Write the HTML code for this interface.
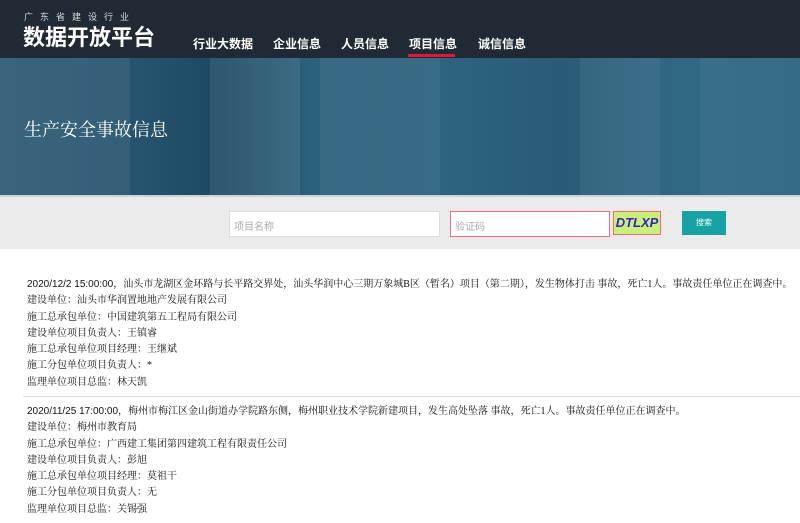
<!DOCTYPE html>
<html><head><meta charset="utf-8"><style>
*{margin:0;padding:0;box-sizing:border-box}
body{width:800px;height:523px;overflow:hidden;background:#fff;font-family:"Liberation Sans","Noto Sans CJK SC",sans-serif;position:relative}
.hdr{position:absolute;left:0;top:0;width:800px;height:58px;background:#1f2a35}
.sub{position:absolute;left:24px;top:10px;color:#ddd;font-size:9px;letter-spacing:7px}
.logo{position:absolute;left:23px;top:25px;color:#fff;font-size:22px;font-weight:bold;letter-spacing:0;line-height:26px}
.nav{position:absolute;top:35px;color:#fff;font-size:12px;font-weight:bold}
.ul{position:absolute;left:408px;top:54px;width:47px;height:3px;background:#e0173b}
.ban{position:absolute;left:0;top:58px;width:800px;height:137px;background:linear-gradient(90deg,#2c5c75 0%,#285670 15%,#1b4962 28%,#2d627d 40%,#2e6480 55%,#285b76 70%,#306884 85%,#2c6480 100%)}
.ban .v{position:absolute;top:0;height:137px;background:rgba(255,255,255,.06)}
.ban h1{position:absolute;left:24px;top:58px;color:#fff;font-size:18px;font-weight:normal;font-family:"Noto Serif CJK SC",serif}
.srch{position:absolute;left:0;top:195px;width:800px;height:54px;background:#ebebeb;border-top:2px solid #c9d3da}
.in{position:absolute;top:14px;height:26px;background:#fff;border:1px solid #ddd;font-size:10px;color:#aaa;padding:6px 4px}
.btn{position:absolute;left:682px;top:14px;width:44px;height:24px;background:#17a2a3;color:#fff;font-size:8px;text-align:center;line-height:24px}
.cap{position:absolute;left:613px;top:14px;width:48px;height:24px;border:1px solid #ff6b6b;background:#c9f07a;color:#3a1fc0;font-style:italic;font-size:13px;font-weight:bold;text-align:center;line-height:22px}
.c{position:absolute;left:27px;font-size:10px;line-height:16.3px;color:#111;font-family:"Liberation Serif","Noto Serif CJK SC",serif;white-space:nowrap}
.hr{position:absolute;left:23px;width:777px;height:1px;background:#ddd}
</style></head><body>
<div class="hdr">
<div class="sub">广东省建设行业</div>
<div class="logo">数据开放平台</div>
<div class="nav" style="left:193px">行业大数据</div>
<div class="nav" style="left:273px">企业信息</div>
<div class="nav" style="left:341px">人员信息</div>
<div class="nav" style="left:409px">项目信息</div>
<div class="nav" style="left:478px">诚信信息</div>
<div class="ul"></div>
</div>
<div class="ban">
<div class="v" style="left:0;width:130px"></div>
<div class="v" style="left:210px;width:90px;background:rgba(255,255,255,.09)"></div>
<div class="v" style="left:320px;width:120px;background:rgba(255,255,255,.05)"></div>
<div class="v" style="left:580px;width:80px;background:rgba(255,255,255,.06)"></div>
<div class="v" style="left:700px;width:100px;background:rgba(255,255,255,.05)"></div>
<h1>生产安全事故信息</h1>
</div>
<div class="srch">
<div class="in" style="left:229px;width:211px">项目名称</div>
<div class="in" style="left:450px;width:160px;border-color:#f0708a">验证码</div>
<div class="cap">DTLXP</div>
<div class="btn">搜索</div>
</div>
<div class="c" style="top:277px"><span style="font-family:'Liberation Sans','Noto Sans CJK SC',sans-serif">2020/12/2 15:00:00</span>，汕头市龙湖区金环路与长平路交界处，汕头华润中心三期万象城B区（暂名）项目（第二期），发生物体打击 事故，死亡1人。事故责任单位正在调查中。<br>建设单位：汕头市华润置地地产发展有限公司<br>施工总承包单位：中国建筑第五工程局有限公司<br>建设单位项目负责人：王镇睿<br>施工总承包单位项目经理：王继斌<br>施工分包单位项目负责人：*<br>监理单位项目总监：林天凯</div>
<div class="hr" style="top:396px"></div>
<div class="c" style="top:404px"><span style="font-family:'Liberation Sans','Noto Sans CJK SC',sans-serif">2020/11/25 17:00:00</span>，梅州市梅江区金山街道办学院路东侧，梅州职业技术学院新建项目，发生高处坠落 事故，死亡1人。事故责任单位正在调查中。<br>建设单位：梅州市教育局<br>施工总承包单位：广西建工集团第四建筑工程有限责任公司<br>建设单位项目负责人：彭旭<br>施工总承包单位项目经理：莫祖干<br>施工分包单位项目负责人：无<br>监理单位项目总监：关锡强</div>
</body></html>
